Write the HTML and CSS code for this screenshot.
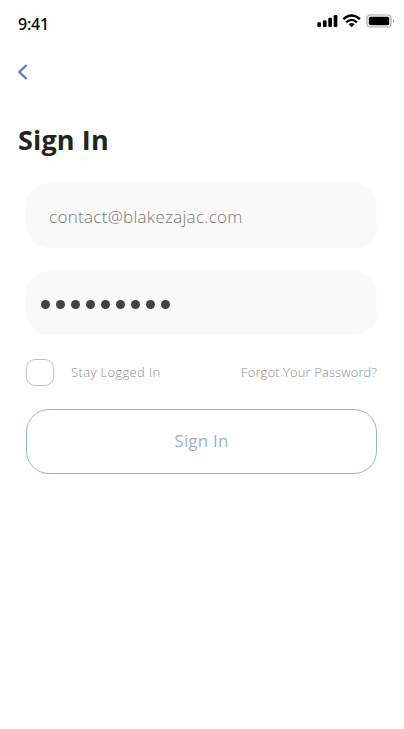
FILE: index.html
```html
<!DOCTYPE html>
<html lang="en">
<head>
<meta charset="utf-8">
<title>Sign In</title>
<link rel="stylesheet" href="styles.css">
</head>
<body>
<header class="status">
  <span class="time">9:41</span>
  <svg class="indicators" width="80" height="16" viewBox="0 0 80 16">
    <rect x="1.3" y="8.3" width="3.7" height="4.7" rx="1.2"/>
    <rect x="6.9" y="6.2" width="3.7" height="6.8" rx="1.2"/>
    <rect x="12.3" y="3.8" width="3.7" height="9.2" rx="1.2"/>
    <rect x="17.7" y="1" width="3.7" height="12" rx="1.2"/>
    <g fill="none" stroke="#000" stroke-width="2.3">
      <path d="M27.3 5.2Q35.6-2.3 43.9 5.2"/>
      <path d="M30.2 8.3Q35.6 3.5 41 8.3"/>
    </g>
    <path d="M32.7 10.3Q35.6 7.9 38.5 10.3L35.6 13.3Z"/>
    <rect x="51" y="1" width="24" height="12" rx="3.2" fill="#fff" stroke="#aaa" stroke-width="1.2"/>
    <rect x="52.8" y="2.8" width="20.4" height="8.4" rx="1.6"/>
    <path d="M77 5Q79 7 77 9Z" fill="#999"/>
  </svg>
</header>
<nav class="nav">
  <svg width="12" height="18" viewBox="0 0 12 18"><path d="M10.6 2L3.4 9L10.6 16" fill="none" stroke="#5b7fc0" stroke-width="2.4"/></svg>
</nav>
<h1 class="title">Sign In</h1>
<main class="form">
  <div class="field email"><span>contact@blakezajac.com</span></div>
  <div class="field password"><i></i><i></i><i></i><i></i><i></i><i></i><i></i><i></i><i></i></div>
  <div class="options">
    <span class="box"></span>
    <span class="stay">Stay Logged In</span>
    <span class="forgot">Forgot Your Password?</span>
  </div>
  <div class="button">Sign In</div>
</main>
</body>
</html>
```
FILE: styles.css
```css
* { box-sizing: border-box; }
body {
  margin: 0;
  width: 404px;
  height: 729px;
  overflow: hidden;
  background: #fff;
  font-family: "Open Sans", "Noto Sans", sans-serif;
}
.status {
  display: flex;
  justify-content: space-between;
  height: 48px;
  padding: 14px 8px 0 18px;
}
.time {
  font: 500 16px/20px "Noto Sans", sans-serif;
  letter-spacing: -0.2px;
  color: #000;
}
.nav { height: 48px; padding: 15px 0 0 16px; }
.nav svg { display: block; }
.title {
  margin: 0;
  padding: 24px 0 0 18px;
  height: 87px;
  font-size: 27px;
  line-height: 40px;
  font-weight: 700;
  letter-spacing: 0.15px;
  color: #212421;
  white-space: nowrap;
}
.form { width: 351px; margin-left: 26px; }
.field {
  display: flex;
  align-items: center;
  height: 65px;
  border-radius: 23px;
  background: #f9f9f9;
}
.email {
  padding: 2px 0 0 23px;
  font-size: 17px;
  font-weight: 300;
  letter-spacing: 0.3px;
  color: #777;
}
.password { height: 64px; margin-top: 23px; padding: 3px 0 0 15px; gap: 6px; }
.password i { width: 9px; height: 9px; border-radius: 50%; background: #424242; }
.options {
  display: flex;
  align-items: center;
  height: 27px;
  margin-top: 24px;
  font-size: 13px;
  line-height: 18px;
  font-weight: 300;
  color: #8c8c8c;
  white-space: nowrap;
}
.box { width: 28px; height: 27px; border: 1px solid #c4c4c4; border-radius: 9px; }
.stay { margin-left: 17px; letter-spacing: 0.35px; }
.forgot { margin-left: auto; letter-spacing: 0.1px; }
.stay, .forgot { padding-bottom: 1px; }
.button {
  display: flex;
  align-items: center;
  justify-content: center;
  height: 65px;
  margin-top: 23px;
  padding-bottom: 2px;
  border: 1px solid #9db1d8;
  border-radius: 23px;
  font-size: 17px;
  letter-spacing: 0.2px;
  color: #9db1d8;
}
.indicators { margin-right: 0; }
```
